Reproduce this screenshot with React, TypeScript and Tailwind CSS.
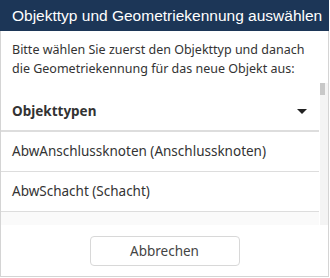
import { X } from "lucide-react";

const rows = ["AbwAnschlussknoten (Anschlussknoten)", "AbwSchacht (Schacht)"];

export default function App() {
  return (
    <div className="w-[330px] h-[278px] bg-white">
      <div className="w-[329px] h-[277px] flex flex-col border-x border-b border-[#d4d4d4] bg-white">
        <div className="h-[31px] shrink-0 -mx-px flex items-center justify-between pl-[12px] pr-[10px] bg-[#1c3657] text-white">
          <span className="whitespace-nowrap text-[15.5px] font-['Liberation_Sans',Arial,sans-serif] leading-none">
            Objekttyp und Geometriekennung auswählen
          </span>
          <X size={18} strokeWidth={1.3} />
        </div>
        <p className="px-[11px] pt-[9px] whitespace-nowrap text-[12.5px] leading-[19px] text-[#333] font-['Noto_Sans',sans-serif]">
          Bitte wählen Sie zuerst den Objekttyp und danach
          <br />
          die Geometriekennung für das neue Objekt aus:
        </p>
        <div className="mt-[5px] h-[142px] shrink-0 flex">
          <div className="w-[320px] flex flex-col bg-[#fafafa] font-['Noto_Sans',sans-serif] text-[13.5px] text-[#333]">
            <div className="h-[49px] pt-[9px] flex items-center justify-between px-[11px] bg-white border-b-2 border-[#ddd]">
              <span className="font-bold">Objekttypen</span>
              <span className="w-0 h-0 border-x-[5px] border-x-transparent border-t-[5px] border-t-[#222] mr-[1px]" />
            </div>
            {rows.map((r) => (
              <div key={r} className="h-[40px] flex items-center px-[11px] bg-white border-b border-[#ddd] whitespace-nowrap">
                {r}
              </div>
            ))}
          </div>
          <div className="w-[8px] ml-[1px] bg-[#f4f4f4]">
            <div className="w-[5px] h-[12px] bg-[#c8c8c8]" />
          </div>
        </div>
        <div className="flex-1 flex items-start justify-center pt-[11px]">
          <button className="w-[150px] h-[30px] rounded-[4px] border border-[#d8d8d8] bg-white text-[13.5px] text-[#444] font-['Noto_Sans',sans-serif]">
            Abbrechen
          </button>
        </div>
      </div>
    </div>
  );
}
